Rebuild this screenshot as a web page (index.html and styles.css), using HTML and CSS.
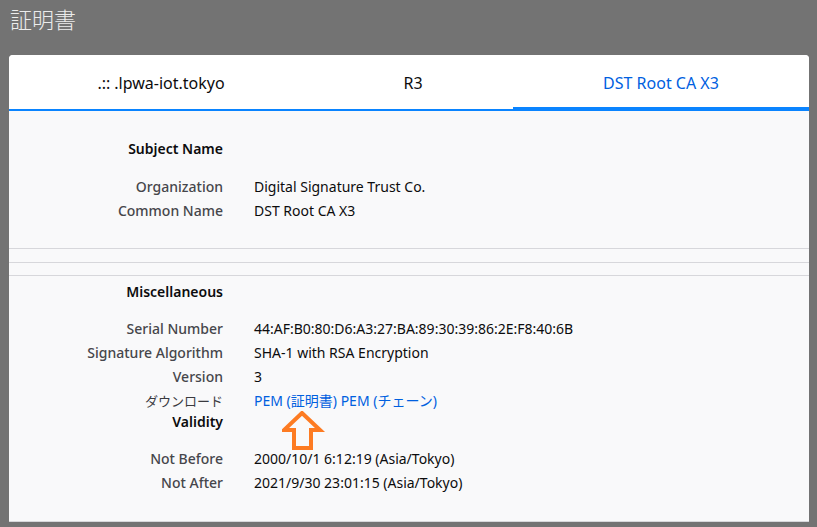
FILE: index.html
```html
<!DOCTYPE html>
<html lang="ja">
<head>
<meta charset="utf-8">
<title>証明書</title>
<link rel="stylesheet" href="styles.css">
</head>
<body>
<h1 class="page-title">証明書</h1>
<div class="card">
  <div class="tabs">
    <div class="tab tab-1"><span class="redact">.:</span><span class="redact2">:</span> .lpwa-iot.tokyo</div>
    <div class="tab tab-2">R3</div>
    <div class="tab tab-3 active">DST Root CA X3</div>
  </div>
  <div class="content">
    <section class="section sec-subject">
      <div class="grid">
        <div class="head">Subject Name</div><div></div>
        <div class="label first">Organization</div><div class="value first">Digital Signature Trust Co.</div>
        <div class="label">Common Name</div><div class="value">DST Root CA X3</div>
      </div>
    </section>
    <div class="spacer a"></div>
    <div class="spacer b"></div>
    <section class="section sec-misc">
      <div class="grid">
        <div class="head misc">Miscellaneous</div><div></div>
        <div class="label first-m">Serial Number</div><div class="value first-m">44:AF:B0:80:D6:A3:27:BA:89:30:39:86:2E:F8:40:6B</div>
        <div class="label">Signature Algorithm</div><div class="value">SHA-1 with RSA Encryption</div>
        <div class="label">Version</div><div class="value">3</div>
        <div class="label jp">ダウンロード</div><div class="value links"><a href="#">PEM (証明書)</a> <a href="#">PEM (チェーン)</a></div>
        <div class="head validity">Validity</div><div class="validity"></div>
        <div class="label first2">Not Before</div><div class="value first2">2000/10/1 6:12:19 (Asia/Tokyo)</div>
        <div class="label">Not After</div><div class="value">2021/9/30 23:01:15 (Asia/Tokyo)</div>
      </div>
    </section>
  </div>
</div>
<svg class="arrow" width="50" height="50" viewBox="0 0 50 50">
  <polygon points="20,2 2,19 12,19 12,37 29,37 29,19 38,19" fill="none" stroke="#fd7b22" stroke-width="4" stroke-linejoin="miter"/>
</svg>
</body>
</html>
```
FILE: styles.css
```css
html, body {
  margin: 0;
  padding: 0;
}
body {
  background: #737373;
  font-family: "Noto Sans", "Noto Sans CJK JP", sans-serif;
  height: 527px;
  overflow: hidden;
  position: relative;
}
.page-title {
  margin: 0;
  height: 55px;
  padding: 3px 0 0 10px;
  box-sizing: border-box;
  font-family: "Noto Sans CJK JP", sans-serif;
  font-weight: 300;
  font-size: 22px;
  line-height: 30px;
  color: #ececec;
}
.card {
  margin-left: 9px;
  width: 800px;
  background: #f9f9fa;
  border-radius: 4px 4px 0 0;
  overflow: hidden;
}
.tabs {
  display: flex;
  background: #fff;
  height: 56px;
}
.tab {
  display: flex;
  align-items: center;
  justify-content: center;
  font-size: 16px;
  color: #0c0c0d;
  border-bottom: 2px solid #0a84ff;
  box-sizing: border-box;
  padding-top: 1px;
}
.tab-1 { width: 304px; }
.tab-2 { width: 200px; }
.tab-3 { width: 296px; }
.tab.active {
  color: #0060df;
  border-bottom-width: 4px;
  padding-top: 3px;
}
.redact2 { margin-right: 4px; }
.section {
  border-bottom: 1px solid #d7d7db;
}
.sec-subject { padding: 26px 0 25px; }
.sec-misc {
  padding: 4px 0 26px;
  border-top: 1px solid #d7d7db;
}
.spacer.a {
  height: 13px;
  border-bottom: 1px solid #d7d7db;
}
.spacer.b { height: 12px; }
.grid {
  display: grid;
  grid-template-columns: 214px 1fr;
  column-gap: 31px;
  font-size: 14px;
  line-height: 24px;
}
.head {
  text-align: right;
  font-weight: 600;
  color: #0c0c0d;
}
.label {
  text-align: right;
  color: #46464b;
  font-weight: 500;
}
.label.jp {
  font-family: "Noto Sans CJK JP", sans-serif;
  font-weight: 400;
  font-size: 13px;
  color: #3a3a3f;
}
.value { color: #0c0c0d; }
.first { margin-top: 14px; }
.first-m { margin-top: 13px; }
.first2 { margin-top: 13px; }
.head.validity, div.validity { margin-top: -3px; }
.links a {
  color: #0060df;
  text-decoration: none;
}
.arrow {
  position: absolute;
  left: 282px;
  top: 411px;
}
```
